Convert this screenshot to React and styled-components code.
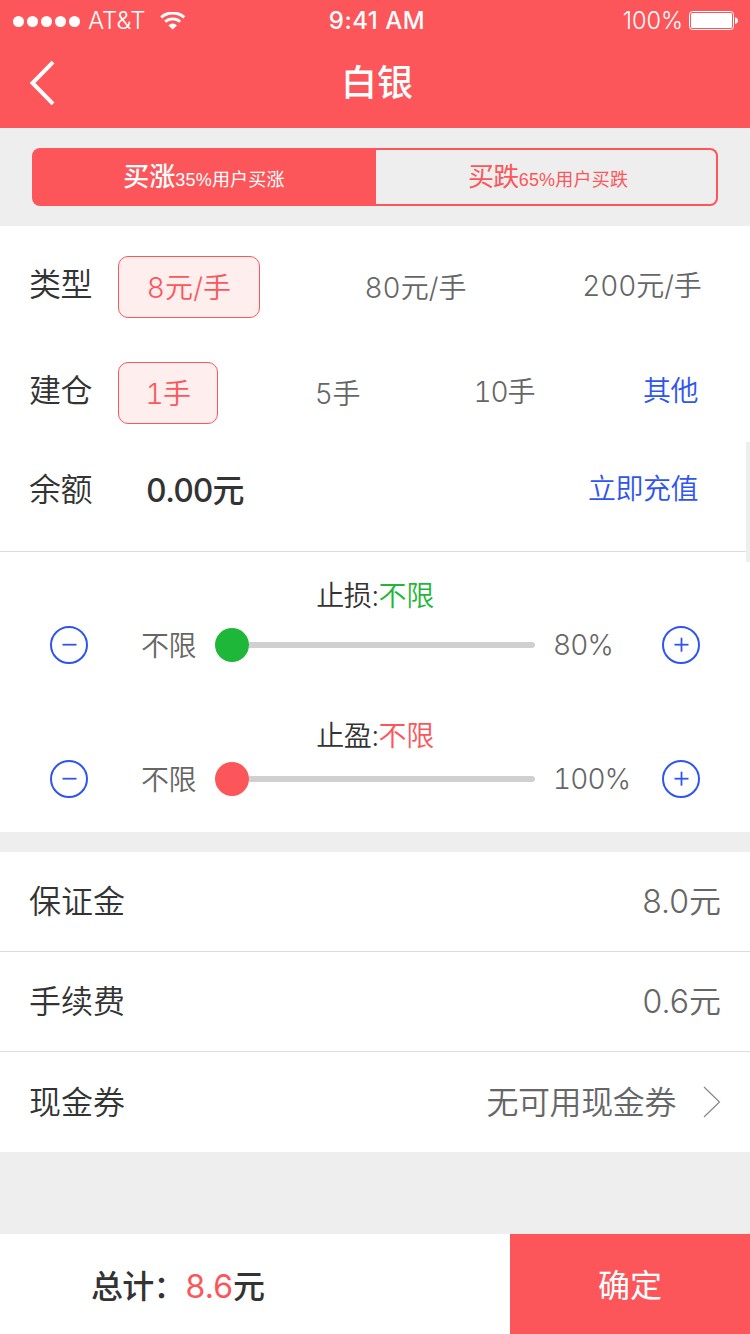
import React, { useState } from 'react';
import styled, { createGlobalStyle } from 'styled-components';

const color = {
  red: '#fc565a',
  pink: '#ffeeee',
  blue: '#2f55f0',
  green: '#1fb739',
  dark: '#333333',
  grey: '#666666',
  line: '#dddddd',
  bg: '#eeeeee'
};

const typeOptions = [
  { label: '8元/手', space: 0.2, lift: 3 },
  { label: '80元/手', space: 0, lift: 3 },
  { label: '200元/手', space: -0.1, lift: 7 }
];

const lotOptions = [
  { label: '1手', space: -0.5, lift: 3 },
  { label: '5手', space: -0.3, lift: 3 },
  { label: '10手', space: -1, lift: 7 }
];

function StatusBar() {
  return (
    <StatusBarEl>
      <Carrier>
        <Dots>
          <Dot />
          <Dot />
          <Dot />
          <Dot />
          <Dot />
        </Dots>
        <CarrierName>AT&amp;T</CarrierName>
        <svg width="26" height="19" viewBox="0 0 26 19" fill="none">
          <path d="M1.2 5.4A17 17 0 0 1 24.2 5.4" stroke="#fff" strokeWidth="3" />
          <path d="M5.2 9.8A11 11 0 0 1 20.2 9.8" stroke="#fff" strokeWidth="2.8" />
          <path d="M12.7 17.6L8.4 13.4Q12.7 9.8 17 13.4Z" fill="#fff" />
        </svg>
      </Carrier>
      <Clock>9:41 AM</Clock>
      <Battery>
        <BatteryText>100%</BatteryText>
        <svg width="49" height="20" viewBox="0 0 49 20" fill="none">
          <rect x="0.5" y="0.5" width="44" height="18" rx="3" stroke="#fff" />
          <rect x="2" y="2" width="41" height="15" rx="1.5" fill="#fff" />
          <path d="M46 6.2Q49 7 49 9.6Q49 12.2 46 13Z" fill="#fff" />
        </svg>
      </Battery>
    </StatusBarEl>
  );
}

function Options({ items, columns, chipWidth, selected, onSelect, label, children }) {
  return (
    <OptionRow $columns={columns}>
      <Label $lift={4}>{label}</Label>
      {items.map((item, i) => (
        <Option
          key={item.label}
          $active={i === selected}
          $width={chipWidth}
          $space={item.space}
          $lift={item.lift}
          onClick={() => onSelect(i)}
        >
          {item.label}
        </Option>
      ))}
      {children}
    </OptionRow>
  );
}

function RoundButton({ plus }) {
  return (
    <Round>
      <svg width="38" height="38" viewBox="0 0 38 38" fill="none">
        <circle cx="19" cy="19" r="18" stroke={color.blue} strokeWidth="2" />
        <path d="M12.5 18.7H26.5" stroke={color.blue} strokeWidth="1.8" />
        {plus && <path d="M19.5 11.7V25.7" stroke={color.blue} strokeWidth="1.8" />}
      </svg>
    </Round>
  );
}

function LimitSlider({ title, max, tint, gap }) {
  return (
    <Limit>
      <LimitTitle $gap={gap}>
        {title}:<Tinted $tint={tint}>不限</Tinted>
      </LimitTitle>
      <LimitRow>
        <RoundButton />
        <LimitMin>不限</LimitMin>
        <Knob $tint={tint} />
        <Track />
        <LimitMax>{max}</LimitMax>
        <RoundButton plus />
      </LimitRow>
    </Limit>
  );
}

export default function App() {
  const [side, setSide] = useState('up');
  const [type, setType] = useState(0);
  const [lot, setLot] = useState(0);

  return (
    <Page>
      <GlobalStyle />
      <StatusBar />
      <NavBar>
        <Back>
          <svg width="26" height="46" viewBox="0 0 26 46" fill="none">
            <path d="M24 2.2L3.5 23L24 43.8" stroke="#fff" strokeWidth="4" />
          </svg>
        </Back>
        <Title>白银</Title>
      </NavBar>
      <TabArea>
        <Tab $active={side === 'up'} onClick={() => setSide('up')}>
          买涨<small>35%用户买涨</small>
        </Tab>
        <Tab $active={side === 'down'} onClick={() => setSide('down')}>
          买跌<small>65%用户买跌</small>
        </Tab>
      </TabArea>
      <OrderPanel>
        <OrderBody>
          <Options
            label="类型"
            items={typeOptions}
            columns="118px 142px 311px 142px"
            chipWidth={142}
            selected={type}
            onSelect={setType}
          />
          <Options
            label="建仓"
            items={lotOptions}
            columns="118px 100px 239px 94px 1fr"
            chipWidth={100}
            selected={lot}
            onSelect={setLot}
          >
            <Link $lift={9}>其他</Link>
          </Options>
          <BalanceRow>
            <Label $lift={0}>余额</Label>
            <Balance>0.00元</Balance>
            <Link $lift={6}>立即充值</Link>
          </BalanceRow>
        </OrderBody>
        <ScrollThumb />
      </OrderPanel>
      <LimitPanel>
        <LimitSlider title="止损" max="80%" tint={color.green} gap={10} />
        <LimitSlider title="止盈" max="100%" tint={color.red} gap={4} />
      </LimitPanel>
      <FeeList>
        <FeeRow>
          <FeeText>保证金</FeeText>
          <FeeValue>
            <FeeText>8.0元</FeeText>
          </FeeValue>
        </FeeRow>
        <FeeRow>
          <FeeText>手续费</FeeText>
          <FeeValue>
            <FeeText>0.6元</FeeText>
          </FeeValue>
        </FeeRow>
        <FeeRow>
          <FeeText>现金券</FeeText>
          <FeeValue>
            <FeeText $tight>无可用现金券</FeeText>
            <svg width="18" height="32" viewBox="0 0 18 32" fill="none">
              <path d="M1 1L16.5 16L1 31" stroke="#888" strokeWidth="1.2" />
            </svg>
          </FeeValue>
        </FeeRow>
      </FeeList>
      <Footer>
        <Total>
          总计：<Amount>8.6</Amount>元
        </Total>
        <Confirm>确定</Confirm>
      </Footer>
    </Page>
  );
}

const GlobalStyle = createGlobalStyle`
  * {
    box-sizing: border-box;
  }
  body {
    margin: 0;
  }
  svg {
    display: block;
    flex: none;
  }
  button {
    margin: 0;
    padding: 0;
    border: 0;
    background: none;
    font: inherit;
    color: inherit;
    letter-spacing: inherit;
    font-feature-settings: inherit;
  }
`;

const Page = styled.div`
  display: flex;
  flex-direction: column;
  width: 750px;
  height: 1334px;
  overflow: hidden;
  background: ${color.bg};
  color: ${color.dark};
  font-family: Inter, 'Noto Sans CJK SC', sans-serif;
  font-weight: 350;
  font-feature-settings: 'tnum';
  white-space: nowrap;
`;

const StatusBarEl = styled.div`
  display: grid;
  grid-template-columns: 1fr 1fr 1fr;
  align-items: center;
  height: 40px;
  padding: 2px 12px 0 13px;
  background: ${color.red};
  color: white;
  font-size: 24px;
  line-height: 38px;
`;

const Carrier = styled.div`
  display: flex;
  align-items: center;
`;

const Dots = styled.div`
  display: flex;
  gap: 3px;
`;

const Dot = styled.i`
  width: 11px;
  height: 11px;
  border-radius: 50%;
  background: white;
`;

const CarrierName = styled.span`
  width: 59px;
  margin: 0 13px 0 8px;
`;

const Clock = styled.div`
  padding-left: 3px;
  text-align: center;
  font-weight: 550;
  font-feature-settings: normal;
  letter-spacing: 0.5px;
`;

const Battery = styled.div`
  display: flex;
  align-items: center;
  justify-content: flex-end;
`;

const BatteryText = styled.span`
  margin-right: 6px;
  font-size: 23.5px;
  font-feature-settings: normal;
`;

const NavBar = styled.div`
  display: grid;
  grid-template-columns: 100px 1fr 100px;
  align-items: center;
  height: 88px;
  padding-left: 4px;
  background: ${color.red};
  color: white;
`;

const Back = styled.button`
  padding: 0 0 2px 25px;
`;

const Title = styled.h1`
  margin: 0;
  padding-bottom: 2px;
  text-align: center;
  font-size: 36px;
  font-weight: 450;
  line-height: 48px;
`;

const TabArea = styled.div`
  display: grid;
  grid-template-columns: 344px 1fr;
  height: 98px;
  padding: 20px 32px;
`;

const Tab = styled.button`
  height: 58px;
  padding-top: 2px;
  border: 2px solid ${color.red};
  border-radius: 8px 0 0 8px;
  background: ${({ $active }) => ($active ? color.red : 'transparent')};
  color: ${({ $active }) => ($active ? 'white' : color.red)};
  font-size: 26px;
  font-weight: ${({ $active }) => ($active ? 500 : 400)};
  line-height: 48px;

  & + & {
    padding-left: 4px;
    border-left: 0;
    border-radius: 0 8px 8px 0;
    letter-spacing: -0.6px;
  }

  small {
    font-family: 'Liberation Sans', 'Noto Sans CJK SC', sans-serif;
    font-size: 18px;
    font-weight: 400;
    letter-spacing: 0.2px;
  }
`;

const OrderPanel = styled.div`
  display: flex;
  height: 326px;
  border-bottom: 1px solid ${color.line};
  background: white;
`;

const OrderBody = styled.div`
  flex: 1;
  padding-top: 30px;
`;

const ScrollThumb = styled.div`
  position: relative;
  width: 4px;
  height: 120px;
  margin-top: 216px;
  background: ${color.bg};
`;

const OptionRow = styled.div`
  display: grid;
  grid-template-columns: ${({ $columns }) => $columns};
  align-items: center;
  height: 62px;
  margin-bottom: 44px;
`;

const Label = styled.div`
  width: 118px;
  padding: 0 0 ${({ $lift }) => $lift}px 29px;
  font-size: 32px;
  line-height: 48px;
  letter-spacing: -0.4px;
`;

const Option = styled.button`
  justify-self: center;
  width: ${({ $width }) => $width}px;
  height: 62px;
  padding-bottom: ${({ $lift }) => $lift}px;
  border: 1px solid ${({ $active }) => ($active ? color.red : 'transparent')};
  border-radius: 10px;
  background: ${({ $active }) => ($active ? color.pink : 'transparent')};
  color: ${({ $active }) => ($active ? color.red : color.grey)};
  font-size: 28px;
  letter-spacing: ${({ $space }) => $space}px;
`;

const Link = styled.a`
  margin-left: auto;
  padding: 0 48px ${({ $lift }) => $lift}px 0;
  color: ${color.blue};
  font-size: 28px;
  letter-spacing: -0.5px;
`;

const BalanceRow = styled.div`
  display: flex;
  align-items: center;
  height: 44px;
`;

const Balance = styled.div`
  padding: 0 0 4px 28px;
  font-size: 32px;
  font-weight: 450;
  letter-spacing: -1.1px;
`;

const LimitPanel = styled.div`
  height: 280px;
  background: white;
`;

const Limit = styled.div`
  padding-top: 24px;
  height: 140px;
`;

const LimitTitle = styled.div`
  margin-bottom: ${({ $gap }) => $gap}px;
  text-align: center;
  font-size: 28px;
  line-height: 40px;
  letter-spacing: -0.4px;
`;

const Tinted = styled.span`
  color: ${({ $tint }) => $tint};
`;

const LimitRow = styled.div`
  display: flex;
  align-items: center;
  height: 38px;
  padding: 0 50px;
  color: ${color.grey};
  font-size: 28px;
`;

const Round = styled.button`
  flex: none;
`;

const LimitMin = styled.span`
  width: 127px;
  padding: 0 0 3px 53px;
  letter-spacing: -0.5px;
`;

const Knob = styled.i`
  width: 34px;
  height: 34px;
  border-radius: 50%;
  background: ${({ $tint }) => $tint};
`;

const Track = styled.div`
  width: 286px;
  height: 6px;
  border-radius: 0 3px 3px 0;
  background: #d0d0d0;
`;

const LimitMax = styled.span`
  flex: 1;
  padding-left: 18px;
  letter-spacing: -0.9px;
`;

const FeeList = styled.div`
  margin-top: 20px;
  background: white;
`;

const FeeRow = styled.div`
  display: flex;
  align-items: center;
  justify-content: space-between;
  height: 100px;
  padding: 0 29px;
  border-bottom: 1px solid ${color.line};
  font-size: 32px;
  font-feature-settings: normal;

  &:last-child {
    border-bottom: 0;
  }
`;

const FeeText = styled.span`
  padding-bottom: 5px;
  letter-spacing: ${({ $tight }) => ($tight ? '-0.4px' : 0)};
`;

const FeeValue = styled.div`
  display: flex;
  align-items: center;
  gap: 27px;
  color: ${color.grey};
`;

const Footer = styled.div`
  display: flex;
  height: 100px;
  margin-top: auto;
  background: white;
  font-size: 32px;
`;

const Total = styled.div`
  flex: 1;
  padding-left: 91px;
  font-weight: 450;
  line-height: 105px;
  letter-spacing: -0.7px;
`;

const Amount = styled.span`
  color: ${color.red};
  font-weight: 400;
`;

const Confirm = styled.button`
  width: 240px;
  padding-bottom: 2px;
  background: ${color.red};
  color: white;
  font-weight: 400;
`;
